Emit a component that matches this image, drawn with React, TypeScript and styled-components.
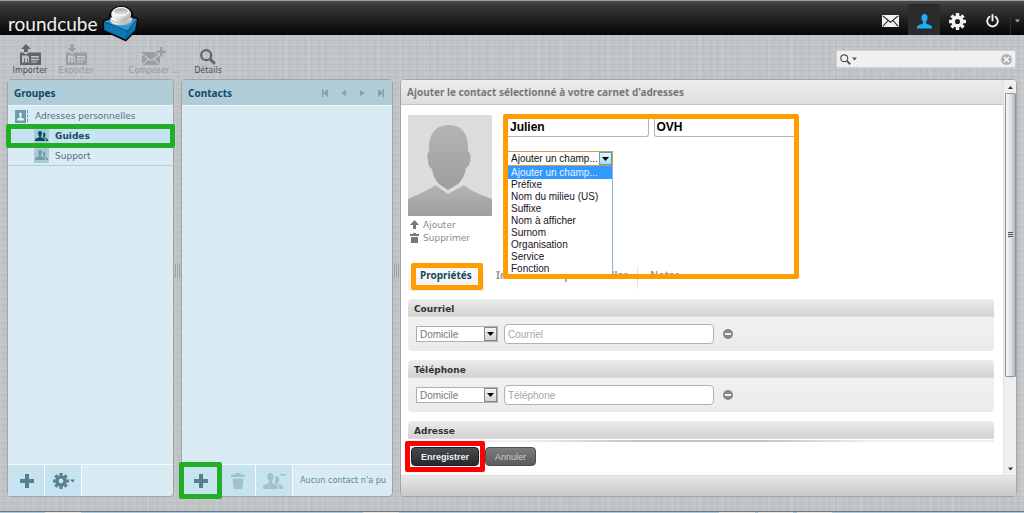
import React from "react";
import styled, { createGlobalStyle, css } from "styled-components";

const verdana = `"DejaVu Sans", Verdana, sans-serif`;
const heading = `"Noto Sans", "Open Sans", sans-serif`;
const arial = `"Liberation Sans", Arial, sans-serif`;

const Global = createGlobalStyle`
  * { box-sizing: border-box; }
  body { margin: 0; font-family: ${verdana}; font-size: 9px; color: #5d7d89; }
  button, input, select { font: inherit; margin: 0; }
  button { cursor: pointer; }
  svg { display: block; flex: none; }
  ul { list-style: none; margin: 0; padding: 0; }
`;

const Page = styled.div`
  min-height: 100vh;
  display: flex;
  flex-direction: column;
  background-color: #c0c4c7;
  background-image:
    repeating-linear-gradient(90deg, rgba(255,255,255,.07) 0 1px, transparent 1px 3px, rgba(90,100,105,.05) 3px 4px, transparent 4px 7px),
    repeating-linear-gradient(90deg, transparent 0 9px, rgba(255,255,255,.08) 9px 11px, transparent 11px 23px),
    repeating-linear-gradient(0deg, rgba(255,255,255,.07) 0 1px, transparent 1px 4px, rgba(90,100,105,.05) 4px 5px, transparent 5px 6px);
`;

const TopBar = styled.header`
  height: 35px;
  display: flex;
  align-items: flex-start;
  justify-content: space-between;
  border-top: 1px solid #9a9d9d;
  background: linear-gradient(#4d4d4d 0, #404040 3px, #383838 5px, #050505 100%);
`;

const Brand = styled.a`
  display: flex;
  color: #f0f0f0;
  text-decoration: none;
  padding: 5px 0 0 8px;
`;

const WordMark = styled.span`
  width: 94px;
  font: 19px/24px Lato, sans-serif;
  padding-top: 6px;
`;

const TaskNav = styled.nav`
  display: flex;
  padding-top: 3px;
`;

const Task = styled.button<{ $active?: boolean; $narrow?: boolean }>`
  width: ${p => (p.$narrow ? 14 : p.$active ? 32 : 35)}px;
  height: 31px;
  padding: 3px 0 0;
  border: 0;
  ${p => p.$narrow && css`border-left: 1px solid #2c2c2c;`}
  display: flex;
  align-items: center;
  justify-content: center;
  background: ${p => (p.$active ? "#2b2b2b" : "transparent")};
  color: ${p => (p.$active ? "#1eaef5" : p.$narrow ? "#a8a8a8" : "#f2f2f2")};
`;

const Toolbar = styled.div`
  height: 44px;
  display: flex;
  align-items: flex-start;
  justify-content: space-between;
  padding: 8px 8px 0 8px;
`;

const Tools = styled.div`
  display: flex;
`;

const Tool = styled.button<{ $off?: boolean; $w: number; $gap?: number }>`
  width: ${p => p.$w}px;
  margin-left: ${p => p.$gap || 0}px;
  height: 33px;
  border: 0;
  padding: 0;
  background: none;
  display: flex;
  flex-direction: column;
  justify-content: flex-end;
  gap: 1px;
  align-items: center;
  font-size: 8px;
  line-height: 10px;
  white-space: nowrap;
  color: ${p => (p.$off ? "#94989b" : "#4c4e50")};
  svg { color: ${p => (p.$off ? "#9b9fa2" : "#626567")}; }
`;

const Search = styled.label`
  width: 180px;
  height: 18px;
  margin-top: 7px;
  padding: 0 3px;
  display: flex;
  align-items: center;
  gap: 1px;
  color: #555;
  background: #f0f0f0;
  border: 1px solid #cdd0d2;
  border-radius: 2px;
  input { flex: 1; min-width: 0; height: 14px; border: 0; background: none; outline: 0; }
`;

const Columns = styled.main`
  flex: 1;
  min-height: 0;
  display: flex;
  padding: 0 7px 14px 7px;
`;

const Panel = styled.section<{ $w: number }>`
  width: ${p => p.$w}px;
  flex: none;
  display: flex;
  flex-direction: column;
  border: 1px solid #a0a4a6;
  border-radius: 4px;
  background: #d9ecf4;
`;

const Splitter = styled.div`
  width: 7px;
  flex: none;
  display: flex;
  align-items: center;
  justify-content: center;
  padding-bottom: 34px;
  &::after { content: ""; width: 5px; height: 14px; background: repeating-linear-gradient(90deg, #9da1a4 0 1px, #c9cccf 1px 2px); }
`;

const PanelHead = styled.div`
  height: 26px;
  display: flex;
  align-items: center;
  justify-content: space-between;
  padding: 0 7px 0 6px;
  background: #b0ccd7;
  border-bottom: 1px solid #e9f5fa;
  border-radius: 3px 3px 0 0;
`;

const PanelTitle = styled.h2`
  margin: 0;
  font: bold 10px/14px ${heading};
  color: #0f4a66;
`;

const Pager = styled.div`
  display: flex;
  gap: 8px;
  color: #7fa3b1;
  button { width: 10px; height: 10px; padding: 1px 0; border: 0; background: none; color: inherit; }
`;

const GroupList = styled.ul`
  flex: 1;
`;

const GroupItem = styled.li<{ $child?: boolean; $selected?: boolean }>`
  height: 20px;
  display: flex;
  align-items: center;
  gap: 6px;
  padding-left: ${p => (p.$child ? 26 : 7)}px;
  line-height: 12px;
  position: relative;
  ${p => p.$selected && css`background: #c7e3ef; font-weight: bold;`}
  a { color: ${p => (p.$selected ? "#0f4a66" : "#4f7180")}; text-decoration: none; }
  &:last-child { border-bottom: 1px solid #b8cfd9; }
`;

const PanelFoot = styled.div`
  height: 32px;
  display: flex;
  border-top: 1px solid #f6fbfd;
`;

const FootButton = styled.button<{ $off?: boolean }>`
  position: relative;
  width: 37px;
  padding: 0;
  border: 0;
  box-shadow: inset -1px 0 #f6fbfd;
  display: flex;
  align-items: center;
  justify-content: center;
  gap: 1px;
  background: #c7e3ef;
  color: ${p => (p.$off ? "#9fc2cf" : "#56808f")};
`;

const Count = styled.span`
  flex: 1;
  white-space: nowrap;
  padding-left: 7px;
  font-family: "DejaVu Sans Condensed", ${verdana};
  line-height: 30px;
  color: #5c8797;
`;

const Mark = styled.span<{ $color: string; $inset: number }>`
  position: absolute;
  inset: ${p => -p.$inset}px;
  border: 5px solid ${p => p.$color};
  border-radius: 2px;
  pointer-events: none;
  z-index: 2;
`;

const Editor = styled.section`
  flex: 1;
  min-width: 0;
  display: flex;
  flex-direction: column;
  border: 1px solid #a0a4a6;
  border-radius: 4px;
  background: #fff;
`;

const EditorMain = styled.div`
  flex: 1;
  min-height: 0;
  display: flex;
`;

const EditorBody = styled.div`
  flex: 1;
  min-width: 0;
  position: relative;
  display: flex;
  flex-direction: column;
`;

const EditorHead = styled.h1`
  margin: 0;
  height: 25px;
  padding-left: 6px;
  font: bold 10px/25px ${heading};
  color: #777;
  background: linear-gradient(#ececec, #dedede);
  border-bottom: 1px solid #c6c6c6;
  border-radius: 3px 0 0 0;
`;

const EditorFoot = styled.div`
  height: 21px;
  border-top: 1px solid #ddd;
  border-radius: 0 0 3px 3px;
  background: linear-gradient(#e8e8e8, #c8c8c8);
`;

const ScrollTrack = styled.div`
  width: 13px;
  display: flex;
  flex-direction: column;
  align-items: center;
  padding: 6px 0 4px;
  color: #333;
  background: #efefef;
  border-left: 1px solid #e2e2e2;
  border-radius: 0 3px 0 0;
`;

const Thumb = styled.div`
  width: 11px;
  height: 284px;
  margin: 4px 0 auto;
  border: 1px solid #929496;
  border-radius: 1px;
  background: linear-gradient(90deg, #f8f8f8, #e2e3e4 50%, #b5b8bb);
  display: flex;
  align-items: center;
  justify-content: center;
  &::after { content: ""; width: 5px; height: 6px; background: repeating-linear-gradient(#555 0 1px, #ddd 1px 2px); }
`;

const PhotoBlock = styled.div`
  width: 84px;
  margin: 10px 0 0 7px;
`;

const PhotoLinks = styled.div`
  padding-top: 2px;
  a { display: flex; align-items: center; gap: 4px; height: 13px; padding-left: 2px; color: #8a8a8a; text-decoration: none; }
`;

const NameBox = styled.div`
  position: absolute;
  left: 102px;
  top: 34px;
  width: 296px;
  height: 165px;
  border: 5px solid #ff9c00;
  border-radius: 2px;
  overflow: hidden;
  z-index: 2;
`;

const NameRow = styled.div`
  display: flex;
  gap: 5px;
`;

const NameInput = styled.input<{ $first?: boolean }>`
  flex: 1;
  min-width: 0;
  height: 18px;
  border: solid #b4b4b4;
  border-width: ${p => (p.$first ? "0 1px 1px 0" : "0 0 1px 1px")};
  border-radius: ${p => (p.$first ? "0 0 3px 0" : "0 0 0 3px")};
  padding: 0 2px 2px;
  font: bold 12px/16px ${arial};
  color: #000;
`;

const SelectWrap = styled.span<{ $w: number; $focus?: boolean }>`
  width: ${p => p.$w}px;
  height: ${p => (p.$focus ? 15 : 16)}px;
  display: flex;
  flex: none;
  background: #fff;
  border: 1px solid ${p => (p.$focus ? "#c9a24e" : "#b0b0b0")};
  ${p => p.$focus && css`border-left: 0;`}
  select {
    flex: 1;
    min-width: 0;
    appearance: none;
    border: 0;
    outline: 0;
    background: none;
    padding: 0 0 0 3px;
    font: 10px/13px ${arial};
    color: ${p => (p.$focus ? "#111" : "#777")};
  }
`;

const Arrow = styled.span<{ $focus?: boolean }>`
  width: 13px;
  flex: none;
  display: flex;
  align-items: center;
  justify-content: center;
  color: #000;
  border: 1px solid ${p => (p.$focus ? "#5c9bc0" : "#8a8a8a")};
  background: ${p => (p.$focus ? "linear-gradient(#e8f6fd, #a9daf3)" : "linear-gradient(#f4f4f4, #d5d5d5)")};
`;

const Options = styled.ul`
  width: 105px;
  height: 112px;
  background: #fff;
  border-right: 1px solid #8cb4d6;
  font: 10px/12px ${arial};
  color: #1c0f24;
  li { padding-left: 3px; }
  li:first-child { background: #3399ff; color: #e6f2ff; height: 13px; line-height: 14px; }
`;

const AddField = styled.div`
  margin-top: 14px;
`;

const Tabs = styled.div`
  display: flex;
  height: 28px;
  margin: 19px 0 8px 7px;
`;

const Tab = styled.button<{ $active?: boolean; $w: number }>`
  position: relative;
  width: ${p => p.$w}px;
  height: 28px;
  padding: 0 0 5px 12px;
  border: 0;
  text-align: left;
  white-space: nowrap;
  font: bold 10px/14px ${heading};
  color: ${p => (p.$active ? "#14495e" : "#999")};
  background: ${p => (p.$active ? "linear-gradient(#fff, #f0f0f0)" : "none")};
  & + & + & {
    border-left: 1px solid;
    border-image: linear-gradient(#fff, #ccc 50%, #fff) 1;
  }
`;

const TabMark = styled.span`
  position: absolute;
  left: 3px;
  top: 0;
  width: 72px;
  height: 27px;
  border: 5px solid #ff9c00;
  border-radius: 2px;
`;

const Fieldset = styled.fieldset<{ $open?: boolean }>`
  margin: 0 9px ${p => (p.$open ? 0 : 9)}px 7px;
  padding: 0;
  min-width: 0;
  border: 0;
  border-radius: ${p => (p.$open ? "4px 4px 0 0" : "4px")};
  overflow: hidden;
  background: linear-gradient(#f4f4f4, #ebebeb);
`;

const Legend = styled.legend`
  float: left;
  width: 100%;
  height: 18px;
  padding: 0 0 0 6px;
  font: bold 9px/20px ${verdana};
  color: #333;
  background: linear-gradient(#ececec, #d2d2d2);
  border-bottom: 1px solid #dcdcdc;
`;

const FieldRow = styled.div`
  clear: both;
  height: 34px;
  display: flex;
  align-items: center;
  gap: 6px;
  padding-left: 8px;
  button { border: 0; background: none; padding: 0; margin-left: 3px; }
`;

const TextInput = styled.input`
  width: 210px;
  height: 20px;
  border: 1px solid #b2b2b2;
  border-radius: 4px;
  padding: 1px 3px 0;
  background: #fff;
  font: 10px/14px ${arial};
  &::placeholder { color: #a6a6a6; opacity: 1; }
`;

const Actions = styled.div`
  position: relative;
  margin-top: auto;
  height: 34px;
  display: flex;
  gap: 6px;
  padding: 6px 0 0 10px;
  background: #fff;
  &::before {
    content: "";
    position: absolute;
    left: 7px;
    right: 9px;
    top: -1px;
    height: 2px;
    background: linear-gradient(90deg, #f0f0f0 20%, #c2c2c2 40%, #c2c2c2 60%, #f0f0f0 80%);
  }
`;

const Action = styled.button<{ $main?: boolean; $w: number }>`
  position: relative;
  width: ${p => p.$w}px;
  height: 19px;
  padding: 0;
  border-radius: 4px;
  border: 1px solid ${p => (p.$main ? "#1c1f22" : "#465058")};
  font: ${p => (p.$main ? "bold" : "normal")} 9px/14px ${arial};
  color: ${p => (p.$main ? "#f0f0f0" : "#cfcfcf")};
  background: ${p => (p.$main ? "linear-gradient(#4a4d4f, #26292b)" : "linear-gradient(#7c7c7c, #5c5c5c)")};
`;

const Taskbar = styled.div`
  height: 2px;
  border-top: 1px solid #6b7880;
  background: linear-gradient(90deg, #a9c9de 0 45px, #e8e6e0 45px 81px, #a9c9de 81px 363px, #e8e6e0 363px 399px,
    #a9c9de 399px 719px, #e8e6e0 719px 755px, #a9c9de 755px 758px, #e8e6e0 758px 793px, #a9c9de 793px 797px,
    #e8e6e0 797px 832px, #a9c9de 832px);
`;

const Down = ({ w = 7 }: { w?: number }) => (
  <svg width={w} height="4" viewBox="0 0 7 4" fill="currentColor"><path d="M0 0h7L3.500 4z" /></svg>
);
const Plus = () => (
  <svg width="14" height="14" viewBox="0 0 14 14" fill="currentColor"><path d="M5 0h4v5h5v4H9v5H5V9H0V5h5z" /></svg>
);
const Gear = ({ size }: { size: number }) => (
  <svg width={size} height={size} viewBox="-8 -8 16 16" fill="none" stroke="currentColor">
    <circle r="4.1" strokeWidth="3.4" />
    {[0, 45, 90, 135, 180, 225, 270, 315].map(a => (
      <path key={a} d="M0-5.200V-8" strokeWidth="3.2" transform={`rotate(${a})`} />
    ))}
  </svg>
);
const Person = () => (
  <svg width="15" height="15" viewBox="0 0 15 15" fill="currentColor">
    <path d="M7.500 0C5.300 0 4.400 1.500 4.500 3.700 4.600 5.900 5.400 7 6.100 7.800V9.600L1.500 11.300C.4 11.800 0 12.700 0 14.500H15C15 12.700 14.600 11.800 13.500 11.300L8.900 9.600V7.800C9.600 7 10.400 5.900 10.500 3.700 10.600 1.500 9.700 0 7.500 0Z" />
  </svg>
);
const Envelope = () => (
  <svg width="17" height="12" viewBox="0 0 17 12">
    <path d="M0 0h17v12H0z" fill="#f2f2f2" />
    <path d="M.8 .8 8.500 7.200 16.200 .8M.8 11.300 6 5.500M16.200 11.300 11 5.500" fill="none" stroke="#222" strokeWidth="1.100" />
  </svg>
);
const Power = () => (
  <svg width="13" height="14" viewBox="0 0 13 14" fill="none" stroke="currentColor" strokeWidth="1.900" strokeLinecap="round">
    <path d="M6.500 1V6.500M3.500 2.800A5.300 5.300 0 1 0 9.500 2.800" />
  </svg>
);
const Card = ({ down }: { down?: boolean }) => (
  <svg width="21" height="21" viewBox="0 0 21 21" fill="currentColor">
    <path d={down ? "M4.500 0h3v4h3L6 8.500 1.500 4h3z" : "M6 0 11 5H8V8H4V5H1z"} />
    <path fillRule="evenodd" d="M0 8.500H3L6 10.500 9 8.500H21V21H0ZM2 11.500V18.500H4V14.500H5V18.500H7V14.500H8V18.500H9V13L7.500 11.500ZM11 12V13.500H19V12ZM11 14.800V16.300H19V14.800ZM11 17.500V18.500H17V17.500Z" />
  </svg>
);
const Compose = () => (
  <svg width="24" height="18" viewBox="0 0 24 18" fill="currentColor">
    <path d="M18 0h2.500v3.500H24V6h-3.500v3.500H18V6h-3.500V3.500H18zM0 5H13.500V7H17L9 12.800 0 6.300ZM0 7.800 5.700 12 0 17ZM1 18 6.800 12.800 9 14.300 11.400 12.800 17.500 18ZM18 8.500V17L12.500 12Z" />
  </svg>
);
const Lens = ({ size, thin }: { size: number; thin?: boolean }) => (
  <svg width={size} height={size} viewBox="0 0 16 16" fill="none" stroke="currentColor">
    <circle cx="6.200" cy="6.200" r="5" strokeWidth={thin ? 1.7 : 2.2} />
    <path d="M10 10 14.800 14.800" strokeWidth="3" />
  </svg>
);
const ClearIcon = () => (
  <svg width="11" height="11" viewBox="0 0 11 11">
    <circle cx="5.500" cy="5.500" r="5.500" fill="#b4b4b4" />
    <path d="M3 3 8 8M8 3 3 8" stroke="#fff" strokeWidth="1.300" />
  </svg>
);
const Trash = () => (
  <svg width="14" height="16" viewBox="0 0 14 16" fill="currentColor">
    <path d="M4.500 0H9.500V1.500H14V4H0V1.500H4.500ZM1.500 5.500H12.500L11.300 16H2.700Z" />
  </svg>
);
const SmallTrash = () => (
  <svg width="9" height="10" viewBox="0 0 9 10" fill="#777">
    <path d="M3 0H6V1H9V3H0V1H3ZM1 4H8V10H1Z" />
  </svg>
);
const UpArrow = () => (
  <svg width="9" height="9" viewBox="0 0 9 9" fill="#777"><path d="M4.500 0 9 5H6V9H3V5H0Z" /></svg>
);
const PeopleMinus = () => (
  <svg width="23" height="16" viewBox="0 0 23 16" fill="currentColor">
    <path d="M7.500 0C5 0 4.300 2 4.500 4.500 4.700 6.500 5.300 7.300 6 8V10L1.500 12C.3 12.500 0 14 0 16H15C15 14 14.700 12.500 13.500 12L9 10V8C9.700 7.300 10.300 6.500 10.500 4.500 10.700 2 10 0 7.500 0Z" />
    <path d="M12 3.500C15 2.500 16.500 4 16 7 15.800 8.500 15.300 9.300 14.800 9.800V10.500L18 12C19.500 12.700 20 14 20 16H16.300C16.300 13.500 15.500 12 14 11.200L11.300 9.800C12.500 8 12.500 6 12 3.500ZM17 1H23V2.500H17Z" />
  </svg>
);
const GroupIcon = ({ active }: { active?: boolean }) => (
  <svg width="15" height="15" viewBox="0 0 15 15">
    <rect width="15" height="15" rx="1" fill={active ? "#a9cbd8" : "#a9c9d5"} />
    <g fill={active ? "#0d4a66" : "#6f9dae"}>
      <path d="M6 2C4.400 2 4 3.200 4.100 4.700 4.200 6 4.700 6.600 5.100 7V8.200L2 9.400C1.300 9.800 1 10.500 1 12H11C11 10.500 10.800 9.800 10 9.400L7 8.200V7C7.400 6.600 7.900 6 8 4.700 8.100 3.200 7.600 2 6 2Z" />
      <path d="M9 3.500C11 3 11.600 4.400 11.400 6 11.300 7 11 7.500 10.700 7.800V8.500L12.800 9.500C13.600 9.900 14 10.700 14 12H12C12 10.200 11.500 9.300 10.500 8.900L8.600 8.100C9.300 7 9.400 5 9 3.500Z" />
    </g>
  </svg>
);
const BookIcon = () => (
  <svg width="14" height="13" viewBox="0 0 14 13">
    <rect width="11" height="13" fill="#6f9caa" />
    <path d="M5.500 2.500C4 2.500 3.800 5.500 4.800 6.500V7.500L2 8.800V10.500H9V8.800L6.200 7.500V6.500C7.200 5.500 7 2.500 5.500 2.500Z" fill="#e3f1f6" />
    <path d="M12.500 0V3M12.500 4.500V7.500M12.500 9V12" stroke="#6f9caa" />
  </svg>
);
const PAGER_ICONS: [string, string][] = [
  ["Première page", "M1 0H2.500V3.500L7 0V8L2.500 4.500V8H1Z"],
  ["Page précédente", "M2 4 7 1V7Z"],
  ["Page suivante", "M8 4 3 1V7Z"],
  ["Dernière page", "M9 0H7.500V3.500L3 0V8L7.500 4.500V8H9Z"],
];
const Minus = () => (
  <svg width="10" height="10" viewBox="0 0 10 10"><circle cx="5" cy="5" r="5" fill="#858585" /><path d="M2 4H8V6H2z" fill="#f4f4f4" /></svg>
);
const Cube = () => (
  <svg width="37" height="36" viewBox="0 0 37 36">
    <defs>
      <linearGradient id="ball" x1="0" y1="0" x2="1" y2="1">
        <stop offset="0" stopColor="#fff" /><stop offset=".5" stopColor="#ececec" /><stop offset="1" stopColor="#8e8e8e" />
      </linearGradient>
      <linearGradient id="bowl" x1="0" y1="0" x2="0" y2="1">
        <stop offset="0" stopColor="#9f9f9f" /><stop offset="1" stopColor="#f2f2f2" />
      </linearGradient>
      <linearGradient id="side"><stop offset="0" stopColor="#04659c" /><stop offset="1" stopColor="#1b83b8" /></linearGradient>
    </defs>
    <path d="M.5 14.500 7 12C6.500 4 12 0 19 0S31.500 4 31.500 10.500L36.500 12 34.500 24.800 24 35.500 .8 25Z" fill="#0a0a0a" />
    <path d="M2 15.500 17 10 35 13 25.500 24.500Z" fill="#2f96cf" />
    <path d="M2 16 25.500 24.500 24 33.500 2.300 24Z" fill="#0b77b3" />
    <path d="M25.500 24.500 35 13.500 33 24 24 33.500Z" fill="url(#side)" />
    <path d="M8.500 11.500V14.500C9.500 21 28.500 21 30 14.500V11.500Z" fill="url(#ball)" />
    <path d="M8.500 12.500C11 18.500 27 18.500 30 12.500" stroke="#b5b5b5" fill="none" />
    <ellipse cx="19.200" cy="8.500" rx="10" ry="7.500" fill="url(#ball)" />
    <ellipse cx="19" cy="5.700" rx="7.500" ry="4" fill="url(#bowl)" stroke="#fff" />
  </svg>
);
const Portrait = () => (
  <svg width="84" height="101" viewBox="0 0 84 101">
    <defs><linearGradient id="man" x1="0" y1="0" x2="0" y2="1"><stop offset="0" stopColor="#b4b4b4" /><stop offset="1" stopColor="#9e9e9e" /></linearGradient></defs>
    <path d="M0 0H84V101H0Z" fill="#dcdcdc" />
    <path d="M0 101V84C4 82 22 75 27 70L40 79 56 70C62 76 78 82 84 84V101Z" fill="url(#man)" />
    <path d="M41 10C54 10 61 19 60 36 63 38 63 43 62 47 61 51 59 52 58 53 57 61 53 66 50 69L40 75 31 69C28 66 25 61 24 54 22 53 20 50 20 46 19 42 19 38 21 36 20 19 28 10 41 10Z" fill="url(#man)" />
  </svg>
);

const FIELDS = ["Ajouter un champ...", "Préfixe", "Nom du milieu (US)", "Suffixe", "Nom à afficher", "Surnom", "Organisation", "Service", "Fonction"];

const Field = ({ name }: { name: string }) => (
  <Fieldset>
    <Legend>{name}</Legend>
    <FieldRow>
      <SelectWrap $w={82}>
        <select aria-label={`Type ${name}`}><option>Domicile</option></select>
        <Arrow><Down /></Arrow>
      </SelectWrap>
      <TextInput placeholder={name} aria-label={name} />
      <button aria-label="Supprimer le champ"><Minus /></button>
    </FieldRow>
  </Fieldset>
);

export default function App() {
  return (
    <Page>
      <Global />
      <TopBar>
        <Brand href="#">
          <WordMark>roundcube</WordMark>
          <Cube />
        </Brand>
        <TaskNav>
          <Task aria-label="Courriel"><Envelope /></Task>
          <Task $active aria-label="Contacts"><Person /></Task>
          <Task aria-label="Paramètres"><Gear size={17} /></Task>
          <Task aria-label="Déconnexion"><Power /></Task>
          <Task $narrow aria-label="Plus"><Down w={5} /></Task>
        </TaskNav>
      </TopBar>
      <Toolbar>
        <Tools>
          <Tool $w={44}><Card />Importer</Tool>
          <Tool $w={44} $gap={2} $off><Card down />Exporter</Tool>
          <Tool $w={54} $gap={29} $off><Compose />Composer ...</Tool>
          <Tool $w={44} $gap={5}><Lens size={16} />Détails</Tool>
        </Tools>
        <Search>
          <Lens size={11} thin />
          <Down w={5} />
          <input aria-label="Rechercher" />
          <ClearIcon />
        </Search>
      </Toolbar>
      <Columns>
        <Panel $w={167}>
          <PanelHead><PanelTitle>Groupes</PanelTitle></PanelHead>
          <GroupList>
            <GroupItem><BookIcon /><a href="#">Adresses personnelles</a></GroupItem>
            <GroupItem $child $selected><GroupIcon active /><a href="#">Guides</a><Mark $color="#23ae27" $inset={2} /></GroupItem>
            <GroupItem $child><GroupIcon /><a href="#">Support</a></GroupItem>
          </GroupList>
          <PanelFoot>
            <FootButton aria-label="Nouveau groupe"><Plus /></FootButton>
            <FootButton aria-label="Options du groupe"><Gear size={16} /><Down w={5} /></FootButton>
          </PanelFoot>
        </Panel>
        <Splitter />
        <Panel $w={212}>
          <PanelHead>
            <PanelTitle>Contacts</PanelTitle>
            <Pager>
              {PAGER_ICONS.map(([label, d]) => (
                <button key={label} aria-label={label}>
                  <svg width="10" height="8" viewBox="0 0 10 8" fill="currentColor"><path d={d} /></svg>
                </button>
              ))}
            </Pager>
          </PanelHead>
          <GroupList />
          <PanelFoot>
            <FootButton aria-label="Nouveau contact"><Plus /><Mark $color="#23ae27" $inset={3} /></FootButton>
            <FootButton $off aria-label="Supprimer"><Trash /></FootButton>
            <FootButton $off aria-label="Retirer du groupe"><PeopleMinus /></FootButton>
            <Count>Aucun contact n'a pu</Count>
          </PanelFoot>
        </Panel>
        <Splitter />
        <Editor>
          <EditorMain>
            <EditorBody>
              <EditorHead>Ajouter le contact sélectionné à votre carnet d'adresses</EditorHead>
              <PhotoBlock>
                <Portrait />
                <PhotoLinks>
                  <a href="#"><UpArrow />Ajouter</a>
                  <a href="#"><SmallTrash />Supprimer</a>
                </PhotoLinks>
              </PhotoBlock>
              <NameBox>
                <NameRow>
                  <NameInput $first defaultValue="Julien" aria-label="Prénom" />
                  <NameInput defaultValue="OVH" aria-label="Nom" />
                </NameRow>
                <AddField>
                  <SelectWrap $w={105} $focus>
                    <select aria-label="Ajouter un champ">{FIELDS.map(f => <option key={f}>{f}</option>)}</select>
                    <Arrow $focus><Down /></Arrow>
                  </SelectWrap>
                  <Options>{FIELDS.map(f => <li key={f}>{f}</li>)}</Options>
                </AddField>
              </NameBox>
              <Tabs>
                <Tab $active $w={76}>Propriétés<TabMark /></Tab>
                <Tab $w={153}>Informations personnelles</Tab>
                <Tab $w={60}>Notes</Tab>
              </Tabs>
              <Field name="Courriel" />
              <Field name="Téléphone" />
              <Fieldset $open><Legend>Adresse</Legend></Fieldset>
              <Actions>
                <Action $main $w={68}>Enregistrer<Mark $color="#ff0000" $inset={7} /></Action>
                <Action $w={51}>Annuler</Action>
              </Actions>
            </EditorBody>
            <ScrollTrack>
              <svg width="5" height="3" viewBox="0 0 5 3" fill="currentColor"><path d="M0 3H5L2.500 0z" /></svg>
              <Thumb />
              <Down w={5} />
            </ScrollTrack>
          </EditorMain>
          <EditorFoot />
        </Editor>
      </Columns>
      <Taskbar />
    </Page>
  );
}
